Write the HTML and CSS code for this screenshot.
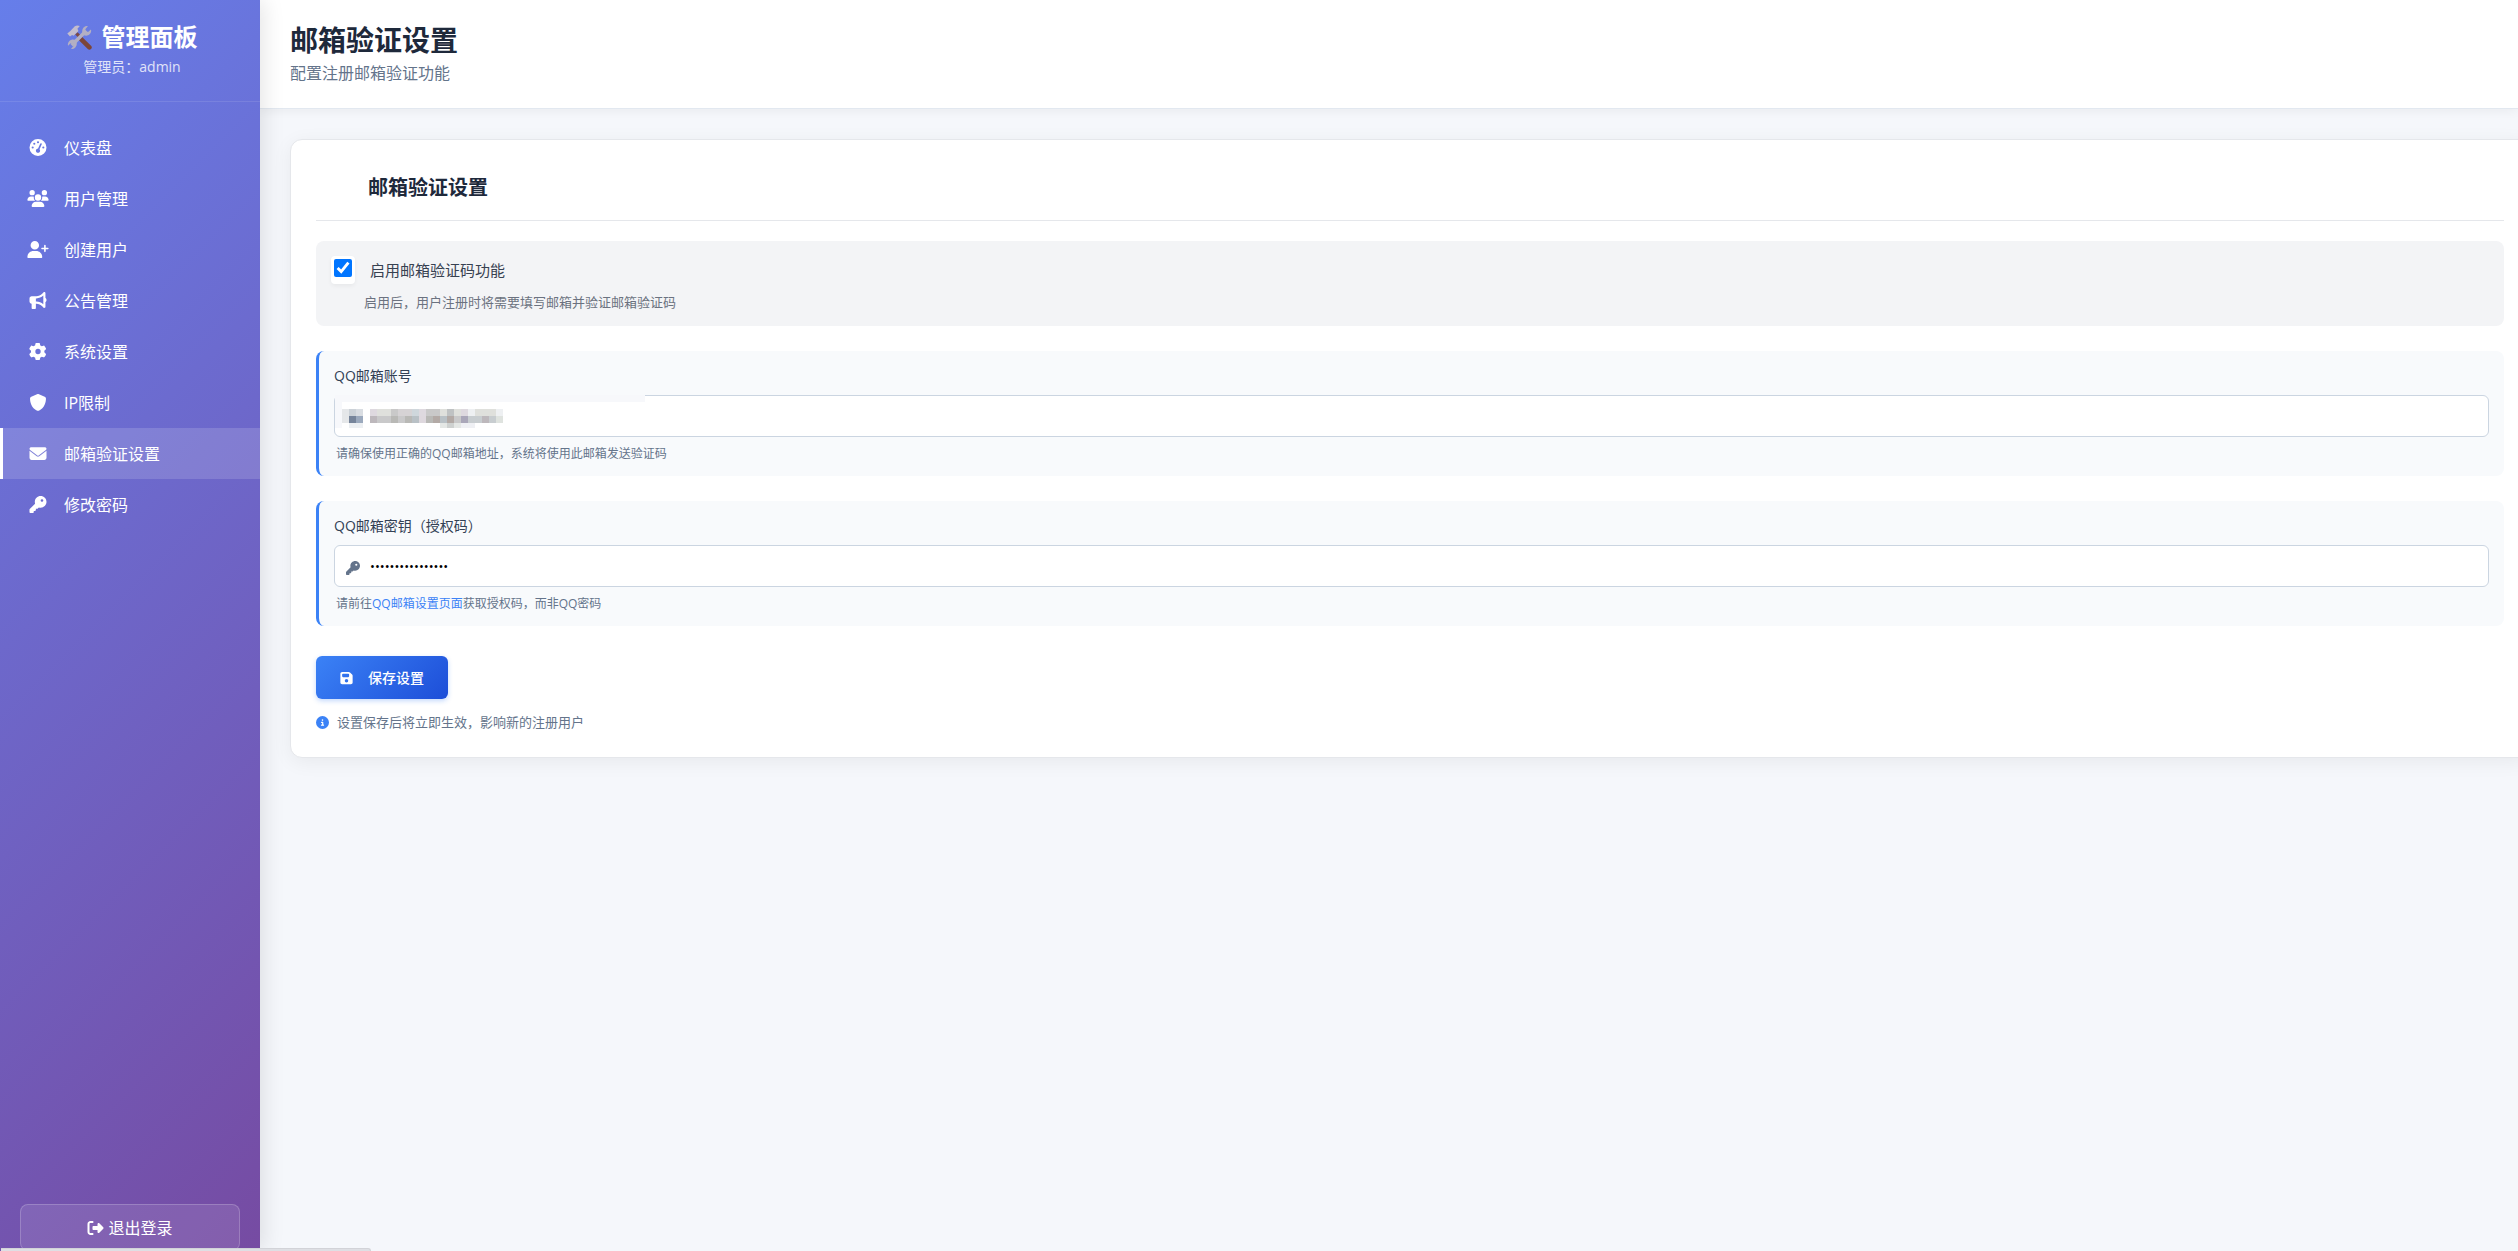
FILE: index.html
```html
<!DOCTYPE html>
<html lang="zh-CN">
<head>
    <meta charset="UTF-8">
    <meta name="viewport" content="width=device-width, initial-scale=1.0">
    <title>邮箱验证设置 - 管理面板</title>
    <link rel="stylesheet" href="styles.css">
</head>
<body>
    <!-- 侧边栏 -->
    <aside class="sidebar">
        <div class="sidebar-header">
            <h2>
                <svg class="logo" viewBox="0 0 24 24" aria-hidden="true">
                    <path d="M9 8 14 13" stroke="#7c4a45" stroke-width="3.200"/>
                    <path d="M13.500 13.500 21.500 21.500" stroke="#7c4538" stroke-width="4.400" stroke-linecap="round"/>
                    <path d="M4.500 19.500 18.500 5.500" stroke="#b3afc3" stroke-width="3.400" fill="none"/>
                    <path d="M16 9.500c-2-2-1.800-5.500.2-7.300C17.500 1 19 .8 20 1.200L17.600 4l.4 2.300 2.200.3L23 4.200c.6 1.500 0 3.500-1.300 4.700-1.800 1.700-4 1.700-5.700.6zM8 14.500c2 2 1.800 5.500-.2 7.300-1.200 1.100-2.800 1.400-3.900 1l2.300-2.700-.4-2.200-2.300-.4L1 20c-.5-1.500.1-3.500 1.300-4.700 1.700-1.700 4-1.900 5.700-.8z" fill="#b3afc3"/>
                    <path d="M.3 8.200 3.200 5.700 7.500 1.200c1.700-1 3.500-.8 4.800-.2L10 3.600l1 2.200-4.700 4.600-1.400-.9-2 1.600z" fill="#c3bdcd"/>
                </svg>
                管理面板
            </h2>
            <p>管理员：admin</p>
        </div>
        <nav class="sidebar-nav">
            <a href="#" class="nav-item">
                <svg viewBox="0 0 512 512"><path fill-rule="evenodd" d="M0 256a256 256 0 1 1 512 0A256 256 0 1 1 0 256zM288 96a32 32 0 1 0-64 0 32 32 0 1 0 64 0zM256 416c35 0 64-29 64-64 0-17-7-33-18-45l67-148c6-12 0-26-12-32s-26 0-32 12l-67 149c-35 1-66 29-66 64s29 64 64 64zM176 144a32 32 0 1 0-64 0 32 32 0 1 0 64 0zM96 288a32 32 0 1 0 0-64 32 32 0 1 0 0 64zm352-32a32 32 0 1 0-64 0 32 32 0 1 0 64 0z"/></svg>
                <span>仪表盘</span>
            </a>
            <a href="#" class="nav-item">
                <svg viewBox="0 0 640 512"><path d="M144 0a80 80 0 1 1 0 160 80 80 0 1 1 0-160zM512 0a80 80 0 1 1 0 160 80 80 0 1 1 0-160zM0 299c0-59 48-107 107-107h43c16 0 31 4 45 10-10 55 10 94 40 118H21c-12 0-21-10-21-21zm405 21c30-24 50-62 40-118 14-7 29-10 45-10h43c59 0 107 48 107 107 0 12-10 21-21 21H405zM224 224a96 96 0 1 1 192 0 96 96 0 1 1-192 0zM128 485c0-73 60-133 133-133h117c74 0 134 60 134 133 0 15-12 27-27 27H155c-15 0-27-12-27-27z"/></svg>
                <span>用户管理</span>
            </a>
            <a href="#" class="nav-item">
                <svg viewBox="0 0 640 512"><path d="M96 128a128 128 0 1 1 256 0A128 128 0 1 1 96 128zM0 482c0-98 80-178 178-178h92c98 0 178 80 178 178 0 17-13 30-30 30H30c-17 0-30-13-30-30zM504 312v-64h-64c-13 0-24-11-24-24s11-24 24-24h64v-64c0-13 11-24 24-24s24 11 24 24v64h64c13 0 24 11 24 24s-11 24-24 24h-64v64c0 13-11 24-24 24s-24-11-24-24z"/></svg>
                <span>创建用户</span>
            </a>
            <a href="#" class="nav-item">
                <svg viewBox="0 0 512 512"><path fill-rule="evenodd" d="M480 32c0-13-8-25-20-30s-26-2-35 7l-43 44c-46 45-107 75-174 75H64c-35 0-64 29-64 64v96c0 35 29 64 64 64v128c0 18 14 32 32 32h64c18 0 32-14 32-32V352h16c67 0 128 30 174 76l43 43c9 9 23 12 35 7s20-17 20-30V300c19-9 32-32 32-60s-13-51-32-60V32zm-64 77v262c-57-53-131-83-208-83h-16v-96h16c77 0 151-30 208-83z"/></svg>
                <span>公告管理</span>
            </a>
            <a href="#" class="nav-item">
                <svg viewBox="0 0 512 512"><path fill-rule="evenodd" d="M496 167c3 9 0 19-7 25l-43 39a200 200 0 0 1 0 50l43 39c7 6 10 16 7 25-11 30-27 56-47 80-6 7-16 10-25 7l-56-18c-13 10-28 19-43 25l-13 57c-2 9-9 16-19 18a256 256 0 0 1-94 0c-9-2-16-9-18-18l-13-57c-15-6-30-15-43-25l-56 18c-9 3-19 0-25-7-20-24-36-50-47-80-3-9 0-19 7-25l43-39a200 200 0 0 1 0-50L4 192c-7-6-10-16-7-25 11-30 27-56 47-80 6-7 16-10 25-7l56 18c13-10 28-19 43-25l13-57c2-9 9-16 18-18a256 256 0 0 1 94 0c10 2 17 9 19 18l13 57c15 6 30 15 43 25l56-18c9-3 19 0 25 7 20 24 36 50 47 80zM256 336a80 80 0 1 0 0-160 80 80 0 1 0 0 160z"/></svg>
                <span>系统设置</span>
            </a>
            <a href="#" class="nav-item">
                <svg viewBox="0 0 512 512"><path d="M256 0c5 0 9 1 13 3l188 80c22 9 39 31 39 57-1 99-42 280-214 362-16 8-36 8-52 0C58 420 17 239 16 140c0-26 17-48 39-57L243 3c4-2 8-3 13-3z"/></svg>
                <span>IP限制</span>
            </a>
            <a href="#" class="nav-item active">
                <svg viewBox="0 0 512 512"><path d="M48 64a48 48 0 0 0-29 86l218 164c11 8 27 8 38 0l218-164a48 48 0 0 0-29-86H48zM0 176v208c0 35 29 64 64 64h384c35 0 64-29 64-64V176L294 339c-22 18-54 18-76 0L0 176z"/></svg>
                <span>邮箱验证设置</span>
            </a>
            <a href="#" class="nav-item">
                <svg viewBox="0 0 512 512"><path fill-rule="evenodd" d="M336 352c97 0 176-79 176-176S433 0 336 0 160 79 160 176c0 19 3 37 8 54L7 391c-4 5-7 11-7 17v80c0 13 11 24 24 24h80c13 0 24-11 24-24v-40h40c13 0 24-11 24-24v-40h40c6 0 12-3 17-7l33-33c17 5 35 8 54 8zm40-256a40 40 0 1 1 0 80 40 40 0 1 1 0-80z"/></svg>
                <span>修改密码</span>
            </a>
        </nav>
        <div class="sidebar-footer">
            <a href="#" class="logout-btn">
                <svg viewBox="0 0 512 512"><path d="M378 105l126 126c5 7 8 16 8 25s-3 18-8 25L378 407c-6 6-14 9-22 9-20 0-36-16-36-36v-60H192c-18 0-32-14-32-32v-64c0-18 14-32 32-32h128v-60c0-20 16-36 36-36 8 0 16 3 22 9zM160 96H96c-18 0-32 14-32 32v256c0 18 14 32 32 32h64c18 0 32 14 32 32s-14 32-32 32H96c-53 0-96-43-96-96V128c0-53 43-96 96-96h64c18 0 32 14 32 32s-14 32-32 32z"/></svg>
                <span>退出登录</span>
            </a>
        </div>
    </aside>

    <!-- 主内容 -->
    <main class="main-content">
        <header class="page-header">
            <h1>邮箱验证设置</h1>
            <p>配置注册邮箱验证功能</p>
        </header>

        <section class="card">
            <h3 class="card-title">邮箱验证设置</h3>
            <form>
                <div class="switch-box">
                    <div class="switch-row">
                        <span class="check-wrap">
                            <input type="checkbox" id="emailVerify" checked>
                        </span>
                        <label for="emailVerify">启用邮箱验证码功能</label>
                    </div>
                    <p>启用后，用户注册时将需要填写邮箱并验证邮箱验证码</p>
                </div>

                <div class="form-group">
                    <label for="qqEmail">QQ邮箱账号</label>
                    <div class="input-wrap">
                        <input type="text" id="qqEmail">
                        <!-- 打码后的邮箱账号 -->
                        <svg class="masked" viewBox="0 0 310 33" shape-rendering="crispEdges" aria-hidden="true">
                            <path fill="#f7f8fb" d="M0 0h310v7H7v26H0z"/>
                            <path fill="#fff" d="M7 7h303v26H7z"/>
                            <path fill="#e5e7e9" d="M7 14h7v14H7z"/>
                            <path fill="#ccd2d8" d="M14 14h7v7h-7z"/>
                            <path fill="#d9dde2" d="M21 14h7v7h-7z"/>
                            <path fill="#76849a" d="M14 21h7v7h-7z"/>
                            <path fill="#9ba9bd" d="M21 21h7v7h-7z"/>
                            <path fill="#eceff2" d="M14 28h14v5H14z"/>
                            <path fill="#ded9df" d="M35 14h7v7h-7zM84 14h7v7h-7zM126 14h7v7h-7z"/>
                            <path fill="#dfe0dc" d="M42 14h14v7H42zM105 14h7v7h-7zM119 14h7v7h-7zM140 14h14v7h-14zM154 14h7v7h-7z"/>
                            <path fill="#c9c9c9" d="M56 14h7v7h-7zM91 14h14v7H91z"/>
                            <path fill="#d6d3d5" d="M63 14h14v7H63z"/>
                            <path fill="#cfd7dc" d="M77 14h7v7h-7z"/>
                            <path fill="#bfc2c3" d="M112 14h7v7h-7z"/>
                            <path fill="#eef0f2" d="M133 14h7v7h-7zM161 14h7v7h-7z"/>
                            <path fill="#bdb8bc" d="M35 21h7v7h-7zM147 21h7v7h-7z"/>
                            <path fill="#c9c9ca" d="M42 21h14v7H42zM63 21h7v7h-7zM119 21h7v7h-7z"/>
                            <path fill="#b9b9b6" d="M56 21h7v7h-7zM70 21h7v7h-7zM91 21h7v7h-7z"/>
                            <path fill="#b9c1c6" d="M77 21h7v7h-7zM105 21h7v7h-7z"/>
                            <path fill="#ded8de" d="M84 21h7v7h-7z"/>
                            <path fill="#b3aaa6" d="M98 21h7v7h-7zM112 21h7v7h-7z"/>
                            <path fill="#aaa7b9" d="M126 21h7v7h-7z"/>
                            <path fill="#c8cdd0" d="M133 21h14v7h-14zM154 21h7v7h-7z"/>
                            <path fill="#dfe3df" d="M161 21h7v7h-7z"/>
                            <path fill="#e4e7e5" d="M105 28h7v5h-7zM119 28h7v5h-7z"/>
                            <path fill="#ced1d0" d="M112 28h7v5h-7z"/>
                            <path fill="#eff0f4" d="M126 28h14v5h-14z"/>
                        </svg>
                    </div>
                    <p>请确保使用正确的QQ邮箱地址，系统将使用此邮箱发送验证码</p>
                </div>

                <div class="form-group">
                    <label for="qqKey">QQ邮箱密钥（授权码）</label>
                    <div class="input-wrap">
                        <svg class="input-icon" viewBox="0 0 512 512"><path fill-rule="evenodd" d="M336 352c97 0 176-79 176-176S433 0 336 0 160 79 160 176c0 19 3 37 8 54L7 391c-4 5-7 11-7 17v80c0 13 11 24 24 24h80c13 0 24-11 24-24v-40h40c13 0 24-11 24-24v-40h40c6 0 12-3 17-7l33-33c17 5 35 8 54 8zm40-256a40 40 0 1 1 0 80 40 40 0 1 1 0-80z"/></svg>
                        <input type="password" id="qqKey" value="abcdefghijklmnop">
                    </div>
                    <p>请前往<a href="#">QQ邮箱设置页面</a>获取授权码，而非QQ密码</p>
                </div>

                <button type="submit" class="save-btn">
                    <svg viewBox="0 0 448 512"><path fill-rule="evenodd" d="M64 32C29 32 0 61 0 96v320c0 35 29 64 64 64h320c35 0 64-29 64-64V174c0-17-7-34-19-46l-77-77c-12-12-28-19-45-19H64zm0 96c0-18 14-32 32-32h192c18 0 32 14 32 32v64c0 18-14 32-32 32H96c-18 0-32-14-32-32v-64zm160 160a64 64 0 1 1 0 128 64 64 0 1 1 0-128z"/></svg>
                    <span>保存设置</span>
                </button>
                <p class="save-tip">
                    <svg viewBox="0 0 512 512"><path fill-rule="evenodd" d="M256 512a256 256 0 1 0 0-512 256 256 0 1 0 0 512zM216 336h24v-64h-24c-13 0-24-11-24-24s11-24 24-24h48c13 0 24 11 24 24v88h8c13 0 24 11 24 24s-11 24-24 24h-80c-13 0-24-11-24-24s11-24 24-24zm40-208a32 32 0 1 1 0 64 32 32 0 1 1 0-64z"/></svg>
                    设置保存后将立即生效，影响新的注册用户
                </p>
            </form>
        </section>
    </main>

    <div class="status-bar"></div>
</body>
</html>
```
FILE: styles.css
```css
* {
    margin: 0;
    padding: 0;
    box-sizing: border-box;
}

body {
    font-family: "Open Sans", "Noto Sans CJK SC", sans-serif;
    background: #f5f7fb;
    color: #1e293b;
    display: flex;
    height: 100vh;
    overflow: hidden;
}

svg {
    fill: currentColor;
    flex-shrink: 0;
}

a {
    text-decoration: none;
}

/* 侧边栏 */
.sidebar {
    width: 260px;
    flex-shrink: 0;
    display: flex;
    flex-direction: column;
    background: linear-gradient(135deg, #667eea 0%, #764ba2 100%);
    color: #fff;
    box-shadow: 4px 0 20px rgba(0, 0, 0, 0.1);
    position: relative;
    z-index: 2;
}

.sidebar-header {
    height: 102px;
    padding: 20px 0 0 4px;
    text-align: center;
    border-bottom: 1px solid rgba(255, 255, 255, 0.1);
}

.sidebar-header h2 {
    display: flex;
    align-items: center;
    justify-content: center;
    gap: 10px;
    font-size: 24px;
    line-height: 34px;
}

.logo {
    width: 25px;
    height: 25px;
}

.sidebar-header p {
    margin-top: 2px;
    font-size: 14px;
    line-height: 22px;
    opacity: 0.8;
}

.sidebar-nav {
    flex: 1;
    padding-top: 20px;
}

.nav-item {
    display: flex;
    align-items: center;
    gap: 15px;
    height: 51px;
    padding-left: 24px;
    border-left: 3px solid transparent;
    color: #fff;
    font-size: 16px;
}

.nav-item svg {
    width: 22px;
    height: 17px;
}

.nav-item span,
.logout-btn span,
.save-btn span {
    padding-bottom: 2px;
}

.nav-item.active {
    background: rgba(255, 255, 255, 0.15);
    border-left-color: #fff;
}

.sidebar-footer {
    padding: 0 20px;
}

.logout-btn {
    display: flex;
    align-items: center;
    justify-content: center;
    gap: 4px;
    height: 47px;
    background: rgba(255, 255, 255, 0.1);
    border: 1px solid rgba(255, 255, 255, 0.2);
    border-radius: 8px;
    color: #fff;
    font-size: 16px;
}

.logout-btn svg {
    width: 17px;
    height: 16px;
}

/* 主内容 */
.main-content {
    flex: 1;
    min-width: 0;
}

.page-header {
    height: 109px;
    padding: 20px 30px;
    background: #fff;
    border-bottom: 1px solid #e2e8f0;
    box-shadow: 0 2px 10px rgba(0, 0, 0, 0.05);
}

.page-header h1 {
    font-size: 28px;
    line-height: 40px;
}

.page-header p {
    color: #64748b;
    font-size: 16px;
    line-height: 26px;
}

.card {
    margin: 30px -12px 0 30px;
    padding: 25px 25px 24px;
    background: #fff;
    border: 1px solid #e5e7eb;
    border-radius: 12px;
    box-shadow: 0 4px 20px rgba(0, 0, 0, 0.06);
}

.card-title {
    padding: 5px 52px 15px;
    margin-bottom: 20px;
    border-bottom: 1px solid #e5e7eb;
    font-size: 20px;
    line-height: 35px;
}

/* 开关 */
.switch-box {
    height: 85px;
    margin-bottom: 25px;
    padding: 15px;
    background: #f3f4f6;
    border-radius: 8px;
}

.switch-row {
    display: flex;
    align-items: center;
    gap: 15px;
}

.check-wrap {
    width: 24px;
    height: 28px;
    padding: 3px;
    background: #fff;
    border-radius: 4px;
    box-shadow: 0 2px 4px rgba(0, 0, 0, 0.05);
}

.check-wrap input {
    display: block;
    width: 18px;
    height: 18px;
    accent-color: #0075ff;
}

.switch-row label {
    color: #374151;
    font-size: 15px;
    line-height: 28px;
}

.switch-box p {
    padding: 8px 33px;
    color: #6b7280;
    font-size: 13px;
    line-height: 20px;
}

/* 表单 */
.form-group {
    height: 125px;
    margin-bottom: 25px;
    padding: 15px;
    background: #f8fafc;
    border-left: 3px solid #3b82f6;
    border-radius: 8px;
}

.form-group label {
    display: block;
    margin-bottom: 10px;
    color: #334155;
    font-size: 14px;
    line-height: 19px;
}

.input-wrap {
    position: relative;
}

.input-wrap input {
    display: block;
    width: 100%;
    height: 42px;
    padding: 0 35px;
    background: #fff;
    border: 1px solid #cbd5e1;
    border-radius: 6px;
    font-family: inherit;
    font-size: 13px;
}

.input-icon {
    position: absolute;
    left: 12px;
    top: 16px;
    width: 14px;
    height: 14px;
    color: #64748b;
}

.masked {
    position: absolute;
    left: 1px;
    top: 0;
    width: 310px;
    height: 33px;
}

.form-group p {
    margin-top: 7px;
    padding-left: 2px;
    color: #64748b;
    font-size: 12px;
    line-height: 20px;
}

.form-group p a {
    color: #3b82f6;
}

.save-btn {
    display: flex;
    align-items: center;
    gap: 15px;
    height: 43px;
    margin-top: 30px;
    padding: 0 24px;
    background: linear-gradient(135deg, #3b82f6, #1d4ed8);
    border: none;
    border-radius: 6px;
    box-shadow: 0 2px 5px rgba(59, 130, 246, 0.3);
    color: #fff;
    font-family: inherit;
    font-size: 14px;
    font-weight: 500;
    cursor: pointer;
}

.save-btn svg {
    width: 13px;
    height: 14px;
}

.save-tip {
    display: flex;
    align-items: center;
    gap: 8px;
    margin-top: 12px;
    color: #64748b;
    font-size: 13px;
    line-height: 22px;
}

.save-tip svg {
    width: 13px;
    height: 13px;
    color: #3b82f6;
}

/* 底部状态条 */
.status-bar {
    position: fixed;
    left: 1px;
    bottom: 0;
    z-index: 3;
    width: 370px;
    height: 3px;
    background: #dedfe4;
    border-top: 1px solid #d2d3d8;
    border-right: 1px solid #d2d3d8;
    border-top-right-radius: 4px;
}
```
